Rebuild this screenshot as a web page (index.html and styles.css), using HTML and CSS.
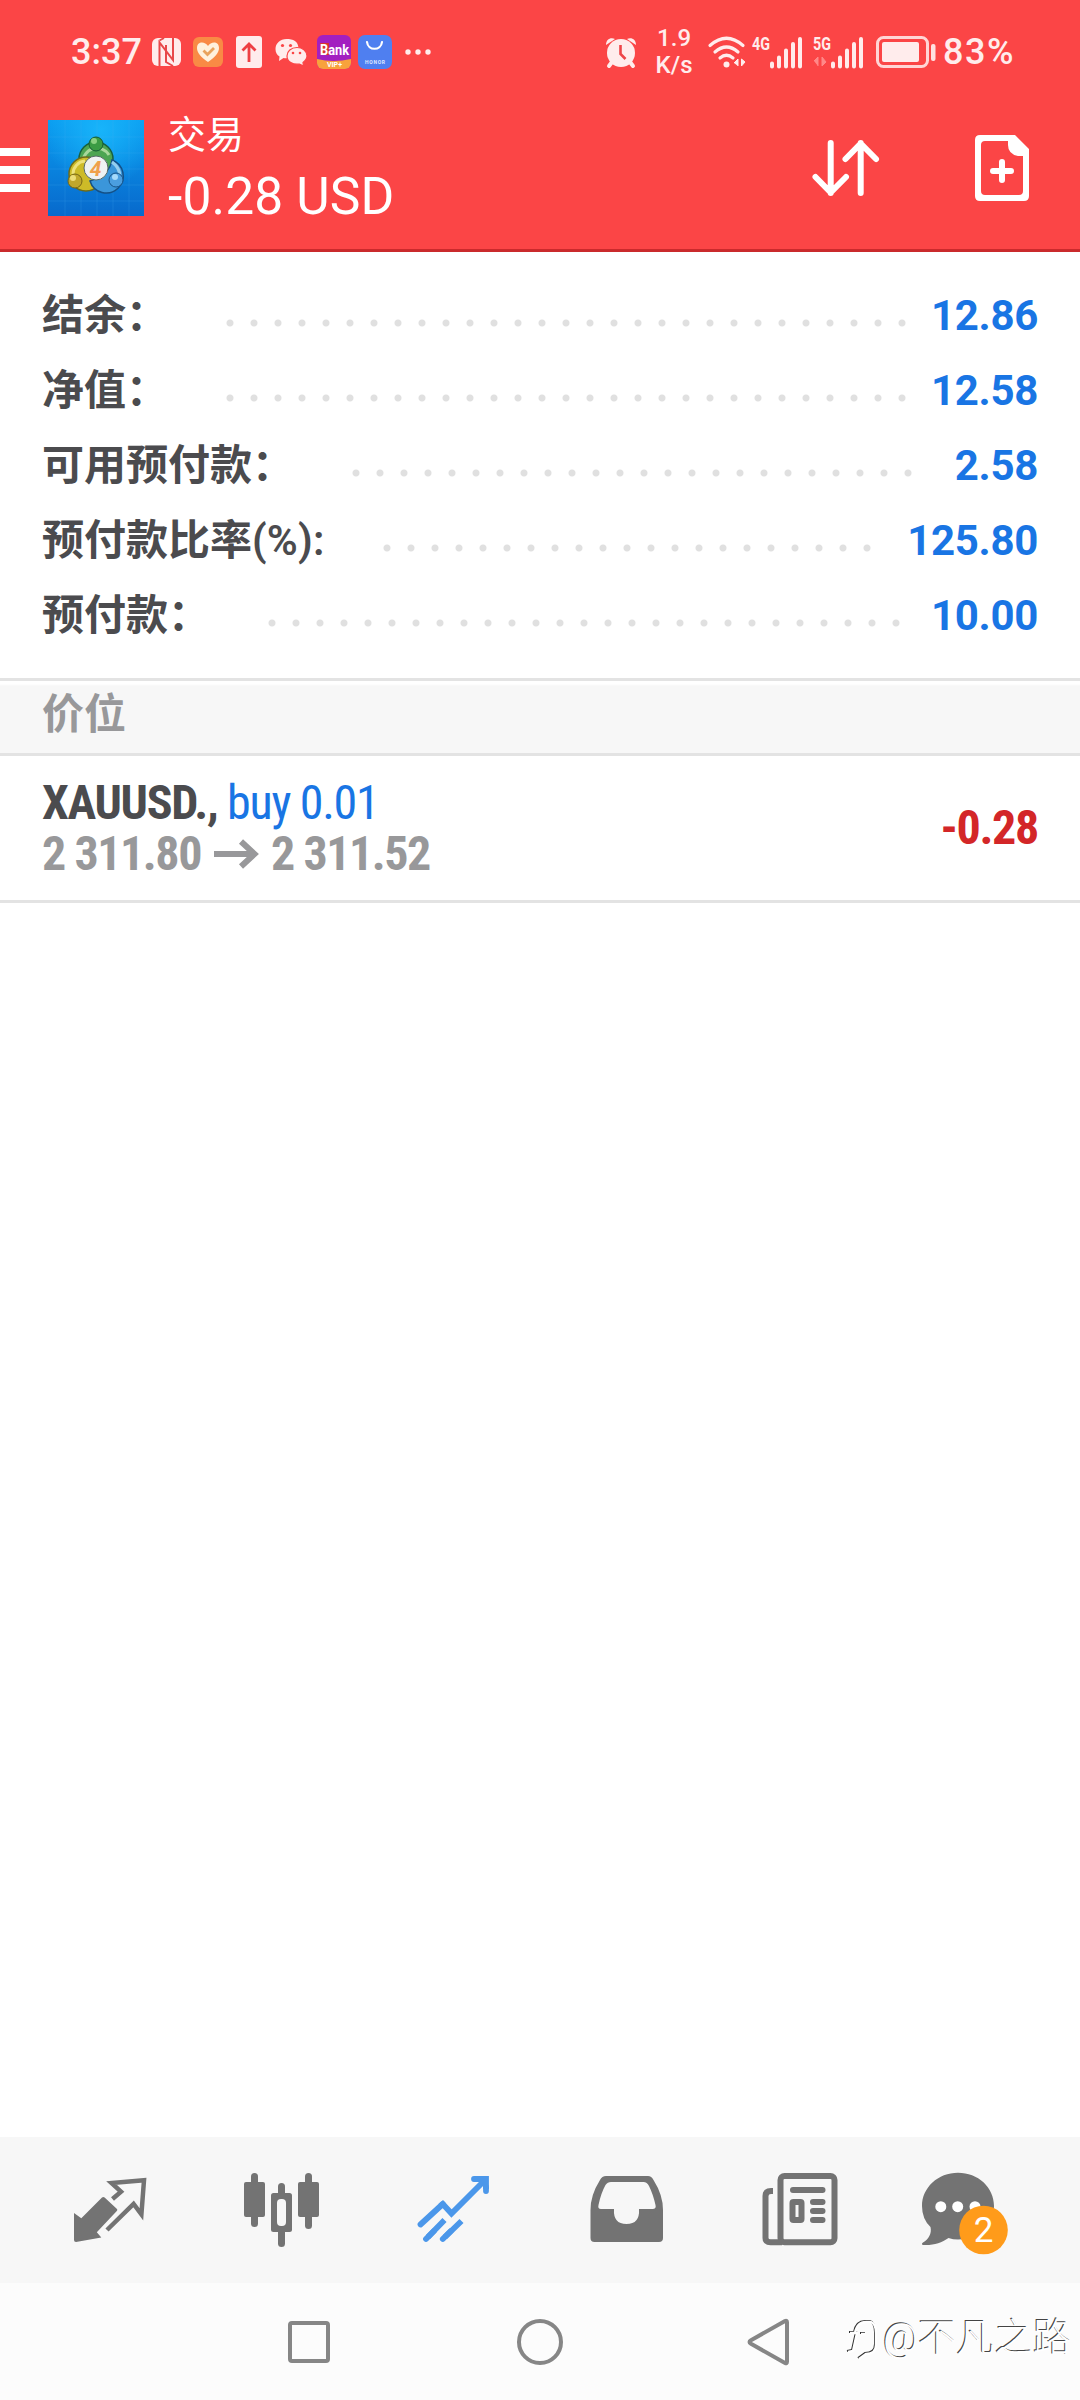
FILE: index.html
```html
<!DOCTYPE html>
<html lang="zh-CN">
<head>
<meta charset="utf-8">
<title>交易</title>
<link rel="stylesheet" href="styles.css">
</head>
<body>
<div class="screen">
  <header class="top">
    <div class="status">
      <span class="clock">3:37</span>
      <div class="status-icons">
        <svg viewBox="0 0 42 42"><rect x="6" y="7" width="29" height="28" rx="6" fill="#ffecec"/><path d="M13.500 35V11.500L27 29V7M18 7l-4.500 2.500M20 14l0 17 7 4" fill="none" stroke="#e8484a" stroke-width="2"/></svg>
        <svg viewBox="0 0 42 42"><rect x="5" y="6" width="30" height="30" rx="6" fill="#f98a45"/><path d="M20 31C13 26 9 22 9 17c0-7 8-7 11-2 3-5 11-5 11 2 0 5-4 9-11 14z" fill="#fff1dc"/><path d="M15.500 19.500l4 4 6.500-6.500" fill="none" stroke="#e9a35c" stroke-width="2.800"/></svg>
        <svg viewBox="0 0 42 42"><rect x="7" y="5" width="26" height="32" rx="3" fill="#ffecec"/><path d="M20 31V13M13.500 19.500L20 13l6.500 6.500" fill="none" stroke="#ee3f43" stroke-width="2.800"/></svg>
        <svg viewBox="0 0 42 42"><path d="M15.500 8C9 8 4.500 12.500 4.500 18c0 3.500 1.500 6 4 7.500L8 30l4.500-3c6 1 15-1 15-9S22 8 15.500 8z" fill="#ffecec"/><path d="M26 16.500c-6 0-10 4-10 8.500 0 6 6 9 12.500 8l4 2-.5-3.500c2-1.500 4-4 4-6.500 0-4.500-4-8.500-10-8.500z" fill="#ffecec" stroke="#fb4546" stroke-width="1.200"/><g fill="#fb4546"><circle cx="11.500" cy="14.500" r="1.600"/><circle cx="19.500" cy="14.500" r="1.600"/><circle cx="22" cy="22" r="1.300"/><circle cx="29" cy="22" r="1.300"/></g></svg>
        <svg viewBox="0 0 42 42"><defs><clipPath id="bank"><rect x="4" y="4" width="34" height="34" rx="6"/></clipPath></defs><g clip-path="url(#bank)"><path d="M4 4h34v34H4z" fill="#a31fc0"/><path d="M4 28q16 4 34 0v10H4z" fill="#f8a23c"/><path d="M7 12h9v12H7z" fill="#d8322f"/></g><text x="7" y="24" class="bank-name" textLength="29" lengthAdjust="spacingAndGlyphs">Bank</text><text x="14" y="36" class="bank-tag">VIP+</text></svg>
        <svg viewBox="0 0 42 42"><rect x="4" y="4" width="34" height="34" rx="7" fill="#4f7ff0"/><path d="M13 11c1 9 14 9 15 0" fill="none" stroke="#fff" stroke-width="2.200" stroke-linecap="round"/><text x="11" y="32.500" class="honor" textLength="20">HONOR</text></svg>
        <svg viewBox="0 0 42 42" fill="#ffecec"><circle cx="12" cy="21" r="2.700"/><circle cx="22" cy="21" r="2.700"/><circle cx="32" cy="21" r="2.700"/></svg>
      </div>
      <div class="status-right">
        <svg class="alarm" viewBox="0 0 32 32" fill="#ffecec"><path d="M1 9C1 4 5 1 10 3zM31 9c0-5-4-8-9-6z"/><circle cx="16" cy="17" r="14"/><path d="M7 26l-3 4M25 26l3 4" stroke="#ffecec" stroke-width="4" stroke-linecap="round"/><path d="M15.500 9v9l5 5" fill="none" stroke="#ee4548" stroke-width="2.600"/></svg>
        <div class="speed"><span>1.9</span><span>K/s</span></div>
        <svg class="wifi" viewBox="0 0 38 32"><g fill="none" stroke="#ffecec" stroke-width="3.200" stroke-linecap="round"><path d="M2 9.500Q18.500-5 35 9.500M7 16q11.500-10 23 0M12 22q6.500-5.500 13 0"/></g><circle cx="18.500" cy="28.500" r="3" fill="#ffecec"/><path d="M26 27l4-4v7M33.500 23v7l3.500-4z" fill="#ffecec" stroke="#ffecec"/></svg>
        <svg class="signal" viewBox="0 0 52 34"><text class="net" x="0" y="15" textLength="18" lengthAdjust="spacingAndGlyphs">4G</text><path d="M20 31.500v-3M27 31.500v-9M34 31.500v-16M41 31.500V9M48 31.500V4" stroke="#ffecec" stroke-width="4" stroke-linecap="round"/></svg>
        <svg class="signal second" viewBox="0 0 52 34"><text class="net" x="0" y="15" textLength="18" lengthAdjust="spacingAndGlyphs">5G</text><path d="M1 26l4-4v9M9 22v9l4-4z" fill="#ff8888" stroke="#ff8888"/><path d="M20 31.500v-3M27 31.500v-9M34 31.500v-16M41 31.500V9M48 31.500V4" stroke="#ffecec" stroke-width="4" stroke-linecap="round"/></svg>
        <svg class="battery" viewBox="0 0 60 32"><rect x="1.500" y="1.500" width="50" height="29" rx="6" fill="none" stroke="#ffd5d5" stroke-width="3"/><rect x="6" y="6" width="37" height="20" rx="2" fill="#ffecec"/><rect x="55" y="8" width="4.500" height="17" rx="2" fill="#ffe0e0"/></svg>
        <span class="percent">83%</span>
      </div>
    </div>
    <div class="bar">
      <div class="menu"><i></i><i></i><i></i></div>
      <svg class="logo" viewBox="0 0 96 96">
        <defs>
          <linearGradient id="sky" x2="0" y2="1"><stop offset="0" stop-color="#0a9df0"/><stop offset="1" stop-color="#0869cc"/></linearGradient>
          <radialGradient id="glow" cx=".55" cy=".1" r=".6"><stop offset="0" stop-color="#18b4fa"/><stop offset="1" stop-color="#18b4fa" stop-opacity="0"/></radialGradient>
        </defs>
        <path d="M0 0h96v96H0z" fill="url(#sky)"/><path d="M0 0h96v96H0z" fill="url(#glow)"/>
        <path d="M17 0v96M33 0v96M49 0v96M65 0v96M81 0v96M0 17h96M0 33h96M0 49h96M0 65h96M0 81h96" stroke="#55b8f5" stroke-opacity=".18"/>
        <circle cx="48" cy="39" r="17" fill="#4da552" stroke="#17603f" stroke-width="1.500"/><path d="M35 43a14 14 0 0 1 26-8" fill="none" stroke="#a8d79a" stroke-width="3"/>
        <circle cx="38" cy="54" r="17" fill="#cdbb28" stroke="#6d6a1a" stroke-width="1.500"/><path d="M25 54a13 13 0 0 1 12-13" fill="none" stroke="#eee27b" stroke-width="3"/>
        <path d="M42 61a17 17 0 1 0 22-21q-2 14-22 21z" fill="#3b96da" stroke="#145086" stroke-width="1.500"/><path d="M64 42q13 10 4 23" fill="none" stroke="#96ceef" stroke-width="3"/>
        <circle cx="48" cy="24" r="7" fill="#3b9b43" stroke="#155a34"/><circle cx="46" cy="21" r="3" fill="#8bd080"/>
        <circle cx="27" cy="61" r="7" fill="#c0a72b" stroke="#756516"/><circle cx="25" cy="58" r="3" fill="#ecdd79"/>
        <circle cx="68" cy="60" r="7" fill="#4b9edf" stroke="#185387"/><circle cx="67" cy="57" r="3" fill="#a7dafa"/>
        <circle cx="48" cy="48" r="12" fill="#eff2f3" stroke="#596b68"/>
        <text x="47.500" y="55.500" text-anchor="middle" class="logo-num">4</text>
      </svg>
      <div class="title"><span class="name">交易</span><span class="profit">-0.28 USD</span></div>
      <svg class="sort" viewBox="0 0 66 58"><path d="M18.700 4v50M3.500 38l15.200 15.500L34 38M48.700 54V4M33.500 20L48.700 4.500 64 20" fill="none" stroke="#fff" stroke-width="6" stroke-linecap="round" stroke-linejoin="round"/></svg>
      <svg class="new-order" viewBox="0 0 54 66"><path d="M5 0h35l14 14v47q0 5-5 5H5q-5 0-5-5V5q0-5 5-5zM10 6q-4 0-4 4v46q0 4 4 4h34q4 0 4-4V21h-5q-10-2-10-11V6z" fill="#fff" fill-rule="evenodd"/><path d="M18 36h18M27 27v18" stroke="#fff" stroke-width="6" stroke-linecap="round"/></svg>
    </div>
  </header>

  <section class="summary">
    <div class="line"><span class="label">结余：</span><i class="dots" style="--n:29"></i><b>12.86</b></div>
    <div class="line"><span class="label">净值：</span><i class="dots" style="--n:29"></i><b>12.58</b></div>
    <div class="line"><span class="label">可用预付款：</span><i class="dots" style="--n:24"></i><b>2.58</b></div>
    <div class="line"><span class="label">预付款比率<em>(%):</em></span><i class="dots" style="--n:21"></i><b>125.80</b></div>
    <div class="line"><span class="label">预付款：</span><i class="dots" style="--n:27"></i><b>10.00</b></div>
  </section>

  <h2 class="section-title">价位</h2>
  <section class="position">
    <div class="deal">
      <div class="symbol"><b>XAUUSD.,</b> <span>buy 0.01</span></div>
      <div class="prices"><b>2 311.80</b><svg viewBox="0 0 44 30"><path d="M0 15h40M27 2.500L40.500 15 27 27.500" fill="none" stroke="#98989a" stroke-width="6"/></svg><b>2 311.52</b></div>
    </div>
    <b class="result">-0.28</b>
  </section>

  <main class="blank"></main>

  <nav class="tabs">
    <svg viewBox="24 0 172 146"><path d="M74 76l7.300 5.300L102 60.500q1.300-1 2.600 0L117 72q.8 1-.2 2L96.800 95.300l4.500 5.200L76 105q-2 0-2-2z" fill="#737373"/><path d="M112.500 62l8.500-7.300-9.500-8.700L144 43.300l-2.600 34L133.600 67 107 93" fill="none" stroke="#737373" stroke-width="4.500"/></svg>
    <svg viewBox="196 0 172 146" fill="#737373"><rect x="244" y="45" width="21" height="35" rx="2"/><rect x="251" y="36" width="7" height="54" rx="3.500"/><rect x="278" y="46" width="7" height="64" rx="3.500"/><rect x="271" y="56" width="21" height="39" rx="2.500"/><rect x="277" y="62" width="9" height="27" rx="4" fill="#f7f7f7"/><rect x="298" y="45" width="21" height="35" rx="2"/><rect x="305" y="36" width="7" height="56" rx="3.500"/></svg>
    <svg viewBox="368 0 172 146"><g fill="none" stroke="#4b97ea" stroke-width="5.800"><path stroke-linecap="round" d="M420.500 87.500L442.800 67M426 102l8-8M442.800 102l8-8"/><path d="M440.500 69l2.300-2 8.700 9.500L485 43M428 100l16.500-17M445 100l16.500-16"/><path stroke-linecap="round" d="M474 42h4M486 50v4"/><path d="M475 42h11v10"/></g></svg>
    <svg viewBox="540 0 172 146"><path fill="#737373" fill-rule="evenodd" d="M606 39h42q3.500 0 5.500 4Q663 58 663 73v28q0 4-4 4h-64.500q-4 0-4-4V73q0-15 9.500-30 2-4 6-4zM611 45q-3.500 0-5.500 3-4.500 8-7 20-1 4 2.500 4h13q-1 15 12.500 15T639 72h13.500q4 0 3-4-2.500-11-6.500-19-2-4-5.500-4z"/></svg>
    <svg viewBox="712 0 172 146"><g fill="none" stroke="#737373" stroke-width="6"><rect x="780.500" y="39" width="54" height="66.300" rx="4"/><path d="M773 54h-2q-5.500 0-5.500 5v42q0 4.300 5 4.300H782"/><rect x="792.500" y="65" width="9" height="18" rx="1"/></g><path d="M793 53h29.500M813 65h9.500M813 74h9.500M813 83h9.500" stroke="#737373" stroke-width="6" stroke-linecap="round"/></svg>
    <svg viewBox="884 0 172 146"><path fill="#737373" d="M958 35.700c20 0 36 14.500 36 33.300s-16 33.500-36 33.500q-5 0-9.500-1.500c-7 5-15 7.500-25 7-2 0-2-1.500-.5-2.500 5.500-3 9-9 7.500-15.500Q922 82 922 69c0-18.500 16-33.300 36-33.300z"/><g fill="#fff"><circle cx="940.800" cy="69.700" r="5.500"/><circle cx="957.700" cy="69.700" r="5.500"/><circle cx="975" cy="69.700" r="5.500"/></g><circle cx="983.500" cy="93" r="24.300" fill="#ff9b1a"/><text x="983.500" y="105" text-anchor="middle" class="badge">2</text></svg>
  </nav>

  <footer class="system">
    <svg viewBox="0 0 50 50"><rect x="6" y="6" width="38" height="38" rx="2"/></svg>
    <svg viewBox="0 0 50 50"><circle cx="25" cy="25" r="21"/></svg>
    <svg viewBox="0 0 50 50"><path d="M5 23.200L39 4q2-1 2 1.500v39q0 2.500-2 1.500L5 26.800q-3-1.800 0-3.600z"/></svg>
    <div class="watermark"><svg viewBox="0 0 32 42"><path d="M2 35l5-1 4-18H4M9 16Q11 5 20 5h5q5 2 5 11v12q0 9-10 9l-7 5M15 17h5" transform="translate(-1 -1)" stroke="#333" stroke-width="2"/><path d="M2 35l5-1 4-18H4M9 16Q11 5 20 5h5q5 2 5 11v12q0 9-10 9l-7 5M15 17h5" stroke="#fff" stroke-width="2.400"/></svg><span>@不凡之路</span></div>
  </footer>
</div>
</body>
</html>
```
FILE: styles.css
```css
* { box-sizing: border-box; margin: 0; padding: 0; }
body { background: #fff; font-family: Roboto, "Noto Sans CJK SC", sans-serif; }
svg { display: block; flex: none; overflow: visible; }
i, em { font-style: normal; }
.screen { width: 1080px; height: 2400px; display: flex; flex-direction: column; overflow: hidden; }

.top { height: 252px; flex: none; background: #fb4546; border-bottom: 3px solid #ca2a2c; color: #fff; }
.status { height: 104px; display: flex; align-items: center; padding: 0 65px 0 71px; color: #ffecec; }
.clock { font-size: 36px; width: 75px; font-weight: 500; white-space: nowrap; }
.status-icons { display: grid; grid-template-columns: repeat(7, 41.7px); }
.status-icons svg { width: 42px; height: 42px; }
.bank-name { font: 700 15px Roboto, sans-serif; fill: #fff; }
.bank-tag { font: 700 7px Roboto, sans-serif; fill: #fff; }
.honor { font: 700 5px Roboto, sans-serif; fill: #dfe8ff; }
.status-right { display: flex; align-items: center; margin-left: auto; }
.alarm { width: 32px; height: 32px; }
.speed { display: flex; flex-direction: column; align-items: center; font-size: 24px; line-height: 27px; width: 38px; margin: 0 15px 0 18px; font-weight: 500; }
.wifi { width: 38px; height: 32px; }
.signal { width: 52px; height: 34px; margin-left: 6px; }
.signal.second { margin-left: 9px; }
.net { font: 700 18.5px Roboto, sans-serif; fill: #ffecec; }
.battery { width: 60px; height: 32px; margin-left: 11px; }
.percent { font-size: 36px; margin-left: 7px; font-weight: 500; letter-spacing: 1.5px; }

.bar { height: 145px; display: flex; align-items: flex-start; padding: 16px 51px 0 0; }
.menu { display: flex; flex-direction: column; gap: 10px; margin: 28px 18px 0 0; }
.menu i { width: 30px; height: 8px; background: #fff; }
.logo { width: 96px; height: 96px; }
.logo-num { font: italic 700 21px Roboto, sans-serif; fill: #efa04c; }
.title { display: flex; flex-direction: column; margin-left: 24px; white-space: nowrap; }
.name { font-size: 38px; line-height: 46px; margin-top: -8px; }
.profit { font-size: 51.500px; line-height: 60px; margin-top: 9px; letter-spacing: .15px; }
.sort { width: 66px; height: 58px; margin: 19px 0 0 auto; }
.new-order { width: 54px; height: 66px; margin: 15px 0 0 97px; }

.summary { height: 426px; flex: none; padding: 26px 42px 0 42px; }
.line { height: 75px; display: flex; align-items: center; font-size: 42px; line-height: 75px; color: #4b4b4e; }
.label { font-weight: 700; white-space: nowrap; }
.label em { font-weight: 600; letter-spacing: .2px; }
.dots { width: calc(var(--n) * 24px); height: 8px; margin: 14px 0 0 50px; background: radial-gradient(circle at 12px 4px, #e0e0e0 3px, transparent 4px) 0 0 / 24px 8px; }
.line b { margin-left: auto; color: #1975e4; letter-spacing: -.3px; }

.section-title { height: 78px; flex: none; border-top: 3px solid #e3e3e3; border-bottom: 3px solid #e3e3e3; background: linear-gradient(#fff 3px, #f7f7f7 5px); padding-left: 42px; font-size: 42px; line-height: 68px; font-weight: 700; color: #98989a; }
.position { height: 147px; flex: none; border-bottom: 3px solid #e3e3e3; display: flex; align-items: center; justify-content: space-between; padding: 0 42px; font-family: "Roboto Condensed", Roboto, sans-serif; font-stretch: 75%; font-size: 48px; letter-spacing: -1.3px; }
.deal { line-height: 51px; color: #98989a; }
.symbol { color: #1975e4; white-space: nowrap; }
.symbol b { color: #4b4b4e; }
.prices { display: flex; align-items: center; gap: 13px; white-space: nowrap; letter-spacing: -1.45px; }
.prices svg { width: 44px; height: 30px; }
.result { color: #d32628; line-height: 51px; margin-top: -2px; }
.blank { flex: 1; }

.tabs { height: 146px; flex: none; display: flex; justify-content: center; background: #f7f7f7; }
.tabs svg { width: 172px; height: 146px; }
.badge { font: 400 35px Roboto, sans-serif; fill: #fff; }
.system { height: 117px; flex: none; display: flex; align-items: flex-start; padding: 34px 0 0 284px; gap: 181px; background: #fcfcfc; }
.system > svg { width: 50px; height: 50px; fill: none; stroke: #868686; stroke-width: 4; }
.watermark { display: flex; align-items: center; gap: 5px; margin: -7px 0 0 -131px; white-space: nowrap; font-size: 38.300px; line-height: 56px; font-weight: 300; color: #fff; text-shadow: -1px -1px 0 #444; }
.watermark svg { width: 32px; height: 42px; fill: none; }
```
